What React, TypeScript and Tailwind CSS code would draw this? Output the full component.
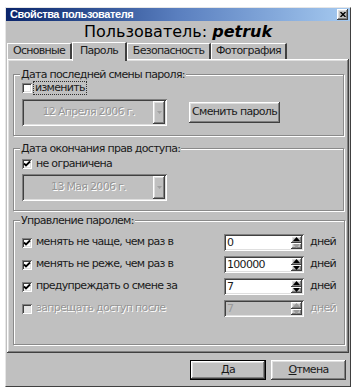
import React from 'react';

const RAISED =
  'bg-[#c0c0c0] shadow-[inset_-1px_-1px_#404040,inset_1px_1px_#ffffff,inset_-2px_-2px_#808080,inset_2px_2px_#dfdfdf]';
const SUNKEN =
  'shadow-[inset_1px_1px_#808080,inset_-1px_-1px_#ffffff,inset_2px_2px_#404040,inset_-2px_-2px_#dfdfdf]';
const DISABLED_TEXT = 'text-[#969696] [text-shadow:1px_1px_0_#ffffff]';

const Checkbox: React.FC<{ checked?: boolean; disabled?: boolean }> = ({ checked, disabled }) => (
  <span
    className={`w-[10px] h-[10px] shrink-0 flex items-center justify-center ${SUNKEN} ${
      disabled ? 'bg-[#e4e4e4]' : 'bg-white'
    }`}
  >
    {checked && (
      <svg width="8" height="8" viewBox="0 0 8 8">
        <path d="M1 3.5 L3 5.5 L7 1.5" stroke="#000" strokeWidth="1.8" fill="none" />
      </svg>
    )}
  </span>
);

const Arrow: React.FC<{ up?: boolean; grey?: boolean }> = ({ up, grey }) => (
  <svg width="7" height="4" viewBox="0 0 7 4">
    <path d={up ? 'M0 4 L3.5 0 L7 4 Z' : 'M0 0 L7 0 L3.5 4 Z'} fill={grey ? '#9a9a9a' : '#000'} />
  </svg>
);

const DateCombo: React.FC<{ value: string }> = ({ value }) => (
  <div className={`w-[145px] h-[27px] flex p-[2px] bg-[#c0c0c0] ${SUNKEN}`}>
    <div className={`flex-1 flex items-center justify-center ${DISABLED_TEXT}`}>{value}</div>
    <div className={`w-[12px] flex items-center justify-center ${RAISED}`}>
      <svg width="5" height="3" viewBox="0 0 5 3">
        <path d="M0 0 L5 0 L2.5 3 Z" fill="#a0a0a0" />
      </svg>
    </div>
  </div>
);

interface SpinRowProps {
  label: string;
  value: string;
  checked?: boolean;
  disabled?: boolean;
  downGrey?: boolean;
}

const SpinRow: React.FC<SpinRowProps> = ({ label, value, checked, disabled, downGrey }) => (
  <div className="flex items-center h-[17px]">
    <Checkbox checked={checked} disabled={disabled} />
    <span className={`ml-[4px] w-[188px] ${disabled ? DISABLED_TEXT : ''}`}>{label}</span>
    <div className={`w-[80px] h-[17px] flex p-[2px] ${SUNKEN} ${disabled ? 'bg-[#c0c0c0]' : 'bg-white'}`}>
      <div className={`flex-1 flex items-center pl-[1px] leading-none ${disabled ? 'text-[#9a9a9a]' : ''}`}>
        {value}
      </div>
      <div className="w-[11px] flex flex-col">
        <div className={`flex-1 flex items-center justify-center ${RAISED}`}>
          <Arrow up grey={disabled} />
        </div>
        <div className={`flex-1 flex items-center justify-center ${RAISED}`}>
          <Arrow grey={disabled || downGrey} />
        </div>
      </div>
    </div>
    <span className={`ml-[6px] ${disabled ? DISABLED_TEXT : ''}`}>дней</span>
  </div>
);

const TABS = ['Основные', 'Пароль', 'Безопасность', 'Фотография'];
const TAB_WIDTHS = ['w-[65px]', 'w-[55px]', 'w-[84px]', 'w-[76px]'];

export default function App() {
  return (
    <div className="w-[354px] h-[391px] bg-white pt-[7px] pl-[5px] overflow-hidden font-['DejaVu_Sans',sans-serif] text-[11px] tracking-[-0.7px] text-[#1a1a1a]">
      <div className="w-[346px] h-[380px] bg-[#c0c0c0] flex flex-col border border-t-[#e6e6e6] border-l-[#e6e6e6] border-r-[#404040] border-b-[#404040]">
        {/* title bar */}
        <div className="h-[13px] flex items-center justify-between pl-[4px] pr-[2px] bg-linear-to-r from-[#0a246a] via-[#5a7fbf] to-[#a6caf0]">
          <span className="text-white font-bold text-[11px] leading-none font-['Liberation_Sans',sans-serif] tracking-[-0.4px]">
            Свойства пользователя
          </span>
          <span className={`w-[11px] h-[11px] flex items-center justify-center ${RAISED}`}>
            <svg width="6" height="5" viewBox="0 0 6 5">
              <path d="M0.5 0 L5.5 5 M5.5 0 L0.5 5" stroke="#000" strokeWidth="1.4" />
            </svg>
          </span>
        </div>

        {/* header */}
        <div className="h-[21px] flex items-center justify-center text-[16px] tracking-normal text-black">
          <span>
            Пользователь: <b className="italic">petruk</b>
          </span>
        </div>

        {/* tabs */}
        <div className="h-[17px] flex items-end pl-[1px] relative z-10">
          {TABS.map((t, i) =>
            i === 1 ? (
              <div
                key={t}
                className={`${TAB_WIDTHS[i]} h-[19px] -mb-[2px] bg-[#c0c0c0] flex items-center justify-center pb-[2px] border-t border-l border-white border-r-[2px] border-r-[#404040]`}
              >
                {t}
              </div>
            ) : (
              <div
                key={t}
                className={`${TAB_WIDTHS[i]} h-[16px] bg-[#c0c0c0] flex items-center justify-center border-t border-l border-white border-r-[2px] border-r-[#404040]`}
              >
                {t}
              </div>
            )
          )}
        </div>

        {/* tab panel */}
        <div className={`ml-[1px] w-[342px] h-[294px] pt-[9px] pl-[6px] ${RAISED}`}>
          <fieldset className="w-[331px] border border-[#8a8a8a] shadow-[1px_1px_0_#ffffff,inset_1px_1px_0_#ffffff] px-[8px] pb-[9px]">
            <legend className="-ml-[2px] px-[1px] bg-[#c0c0c0] leading-[13px]">Дата последней смены пароля:</legend>
            <div className="flex items-center h-[14px]">
              <Checkbox />
              <span className="ml-[1px] px-[1px] h-[14px] flex items-center border border-dotted border-[#303030]">изменить</span>
            </div>
            <div className="flex items-center mt-[4px]">
              <DateCombo value="12 Апреля 2006 г." />
              <button className={`ml-[22px] w-[91px] h-[21px] whitespace-nowrap flex items-center justify-center ${RAISED}`}>
                Сменить пароль
              </button>
            </div>
          </fieldset>

          <fieldset className="mt-[6px] w-[331px] border border-[#8a8a8a] shadow-[1px_1px_0_#ffffff,inset_1px_1px_0_#ffffff] px-[8px] pb-[9px]">
            <legend className="-ml-[2px] px-[1px] bg-[#c0c0c0] leading-[13px]">Дата окончания прав доступа:</legend>
            <div className="flex items-center h-[14px] mt-[2px]">
              <Checkbox checked />
              <span className="ml-[4px]">не ограничена</span>
            </div>
            <div className="mt-[3px]">
              <DateCombo value="13 Мая 2006 г." />
            </div>
          </fieldset>

          <fieldset className="mt-[3px] w-[331px] h-[131px] border border-[#8a8a8a] shadow-[1px_1px_0_#ffffff,inset_1px_1px_0_#ffffff] px-[8px]">
            <legend className="-ml-[2px] px-[1px] bg-[#c0c0c0] leading-[13px]">Управление паролем:</legend>
            <div className="mt-[7px] flex flex-col gap-[5px]">
              <SpinRow label="менять не чаще, чем раз в" value="0" checked downGrey />
              <SpinRow label="менять не реже, чем раз в" value="100000" checked />
              <SpinRow label="предупреждать о смене за" value="7" checked />
              <SpinRow label="запрещать доступ после" value="7" disabled />
            </div>
          </fieldset>
        </div>

        {/* footer */}
        <div className="flex-1 flex items-start justify-end gap-[5px] pt-[7px] pr-[4px]">
          <button className="w-[76px] h-[20px] border border-black p-0">
            <span className={`w-full h-full flex items-center justify-center ${RAISED}`}>
              <span className="underline">Д</span>а
            </span>
          </button>
          <button className={`w-[75px] h-[20px] flex items-center justify-center ${RAISED}`}>
            <span className="underline">О</span>тмена
          </button>
        </div>
      </div>
    </div>
  );
}
